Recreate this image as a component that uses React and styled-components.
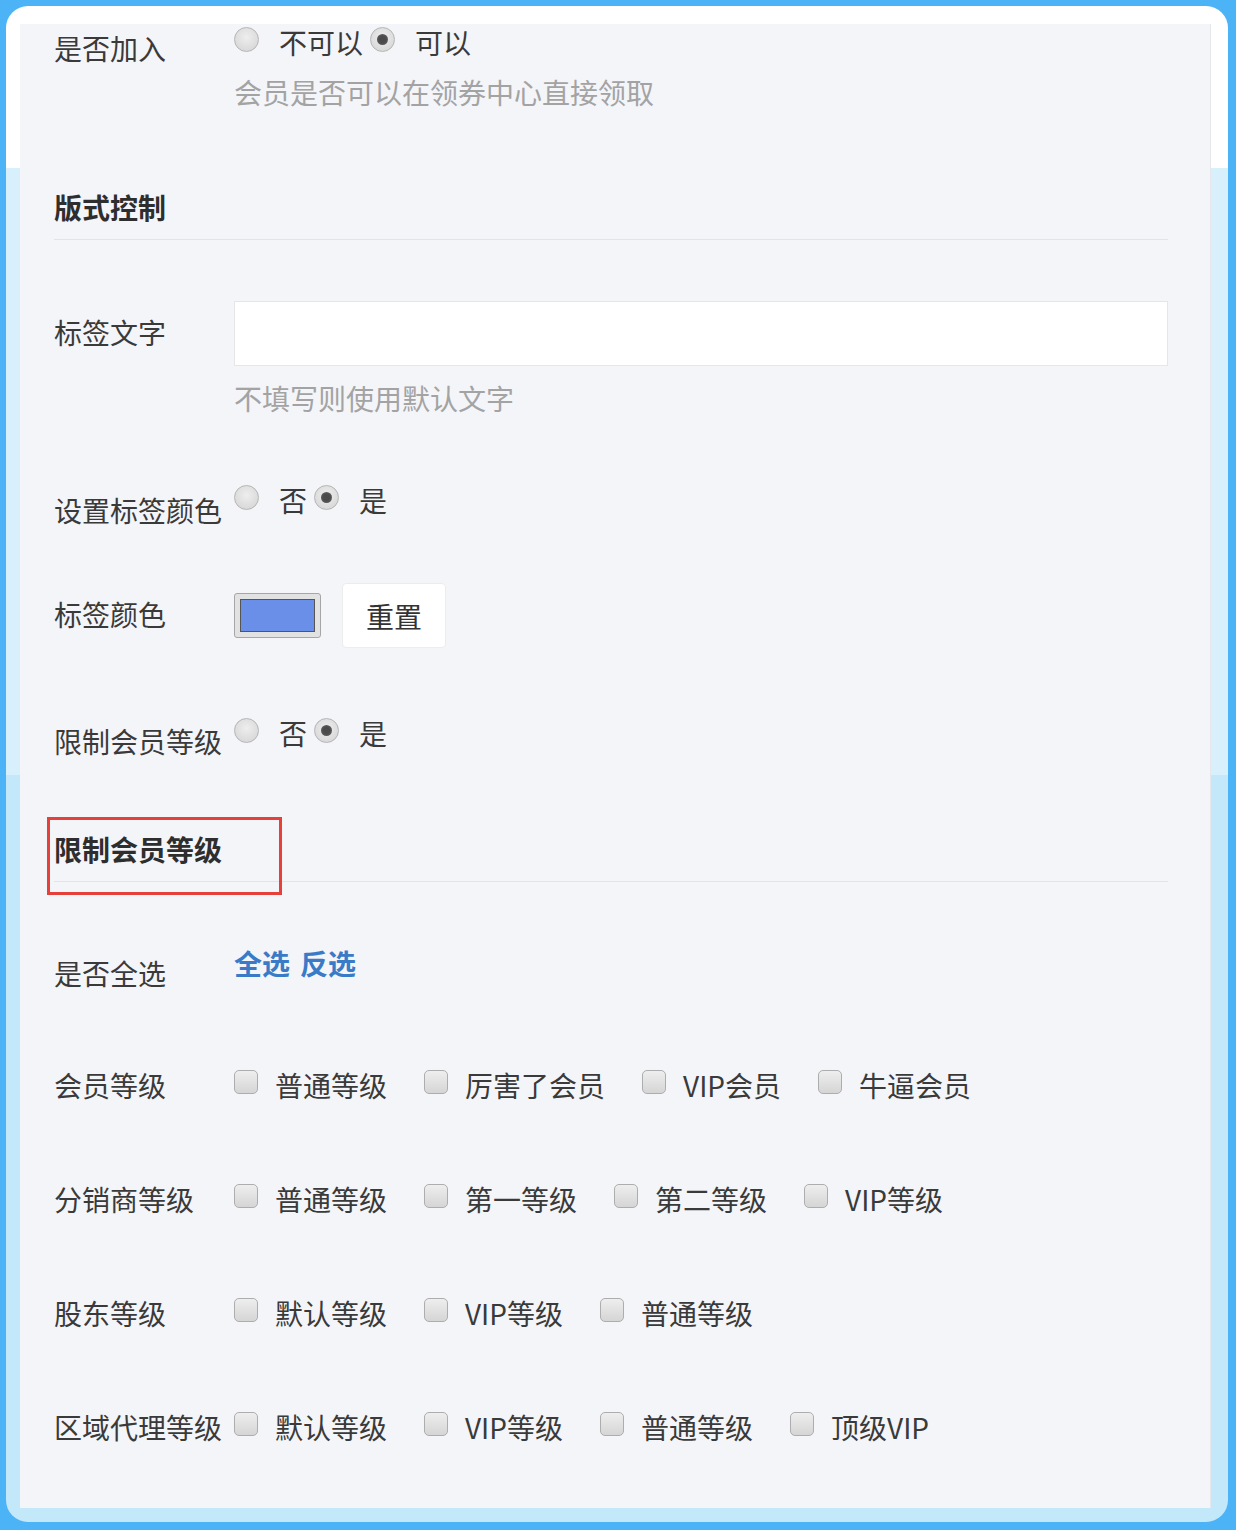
import React from 'react'
import styled, { createGlobalStyle } from 'styled-components'

const GlobalStyle = createGlobalStyle`
    html, body {
        margin: 0;
        padding: 0;
    }
    body {
        background: #4bb3f6;
        font-family: "Noto Sans CJK SC", "Noto Sans", sans-serif;
        color: #3a3a3a;
    }
`

const Frame = styled.div`
    margin: 6px 8px 8px 6px;
    padding: 18px 17px 14px 14px;
    border-radius: 22px;
    background: linear-gradient(
        to bottom,
        #fff 0,
        #fff 162px,
        #d8f0fc 162px,
        #d8f0fc 769px,
        #c3e8fa 769px
    );
`

const Panel = styled.div`
    background: #f4f5f9;
    border-right: 1px solid #e6e7eb;
    padding: 0 42px 63px 34px;
`

const Row = styled.div`
    display: flex;
    align-items: flex-start;
    margin-top: ${props => props.$mt || 0}px;
`

// the label sits a little lower than the controls, without making the row taller
const Label = styled.div`
    width: 180px;
    flex-shrink: 0;
    font-size: 28px;
    line-height: 36px;
    padding-top: ${props => props.$offset || 0}px;
    margin-bottom: ${props => -(props.$offset || 0)}px;
    white-space: nowrap;
`

const Field = styled.div`
    flex: 1;
    display: flex;
    flex-direction: column;
`

const Controls = styled.div`
    display: flex;
    align-items: center;
    min-height: 36px;
    font-size: 28px;
    line-height: 36px;
`

const Help = styled.div`
    margin-top: 14px;
    font-size: 28px;
    line-height: 36px;
    color: #a3a3a3;
`

const SectionTitle = styled.div`
    position: relative;
    margin-top: ${props => props.$mt}px;
    padding-bottom: 14px;
    border-bottom: 1px solid #e3e4e8;
    font-size: 28px;
    line-height: 36px;
    font-weight: bold;
    color: #2e2e2e;
`

const Highlight = styled.span`
    position: absolute;
    left: -7px;
    top: -14px;
    width: 235px;
    height: 78px;
    box-sizing: border-box;
    border: 3px solid #e6403b;
`

const Radio = styled.span`
    position: relative;
    width: 25px;
    height: 25px;
    flex-shrink: 0;
    box-sizing: border-box;
    border-radius: 50%;
    border: 1px solid #b5b5b5;
    background: radial-gradient(circle at 50% 40%, #eeeeee, #d2d2d2);
    margin: 0 20px 6px 0;

    &::after {
        content: '';
        display: ${props => (props.$checked ? 'block' : 'none')};
        position: absolute;
        left: 50%;
        top: 50%;
        width: 11px;
        height: 11px;
        margin: -5.5px 0 0 -5.5px;
        border-radius: 50%;
        background: radial-gradient(circle, #4a4a4a 40%, #6a6a6a);
    }
`

const OptionText = styled.span`
    margin-right: 7px;
`

const Checkbox = styled.span`
    width: 24px;
    height: 24px;
    flex-shrink: 0;
    box-sizing: border-box;
    border-radius: 5px;
    border: 1px solid #adadad;
    background: linear-gradient(to bottom, #eeeeee, #d5d5d5);
    margin: 0 17px 6px 0;
`

const CheckText = styled.span`
    margin-right: 37px;
`

const TextInput = styled.input`
    height: 65px;
    box-sizing: border-box;
    border: 1px solid #e6e6e6;
    background: #fff;
    outline: none;
    font-size: 28px;
    padding: 0 12px;
    width: 100%;
`

const ColorSwatch = styled.span`
    width: 87px;
    height: 45px;
    box-sizing: border-box;
    border: 1px solid #a6a6a6;
    border-radius: 3px;
    background: #e2e2e2;
    padding: 5px;
    margin-right: 21px;

    span {
        display: block;
        height: 100%;
        box-sizing: border-box;
        border: 1px solid #555;
        background: ${props => props.$color};
    }
`

const Button = styled.button`
    width: 104px;
    height: 65px;
    border: 1px solid #ececec;
    border-radius: 4px;
    background: #fff;
    font-family: inherit;
    font-size: 28px;
    color: #333;
    padding: 0;
`

const Link = styled.a`
    color: #3a7bc8;
    font-weight: bold;
    margin-right: 10px;
    cursor: pointer;
`

const RadioGroup = ({ options, value }) => (
    <Controls>
        {options.map(opt => (
            <React.Fragment key={opt}>
                <Radio $checked={opt === value} />
                <OptionText>{opt}</OptionText>
            </React.Fragment>
        ))}
    </Controls>
)

const CheckGroup = ({ items }) => (
    <Controls>
        {items.map(item => (
            <React.Fragment key={item}>
                <Checkbox />
                <CheckText>{item}</CheckText>
            </React.Fragment>
        ))}
    </Controls>
)

const levels = [
    { name: '会员等级', items: ['普通等级', '厉害了会员', 'VIP会员', '牛逼会员'], mt: 86 },
    { name: '分销商等级', items: ['普通等级', '第一等级', '第二等级', 'VIP等级'], mt: 78 },
    { name: '股东等级', items: ['默认等级', 'VIP等级', '普通等级'], mt: 78 },
    { name: '区域代理等级', items: ['默认等级', 'VIP等级', '普通等级', '顶级VIP'], mt: 78 },
]

export default function App() {
    return (
        <>
            <GlobalStyle />
            <Frame>
                <Panel>
                    <Row>
                        <Label $offset={6}>是否加入</Label>
                        <Field>
                            <RadioGroup options={['不可以', '可以']} value="可以" />
                            <Help>会员是否可以在领券中心直接领取</Help>
                        </Field>
                    </Row>

                    <SectionTitle $mt={79}>版式控制</SectionTitle>

                    <Row $mt={61}>
                        <Label $offset={13}>标签文字</Label>
                        <Field>
                            <TextInput />
                            <Help>不填写则使用默认文字</Help>
                        </Field>
                    </Row>

                    <Row $mt={66}>
                        <Label $offset={10}>设置标签颜色</Label>
                        <Field>
                            <RadioGroup options={['否', '是']} value="是" />
                        </Field>
                    </Row>

                    <Row $mt={65}>
                        <Label $offset={13}>标签颜色</Label>
                        <Field>
                            <Controls>
                                <ColorSwatch $color="#6a8fe9"><span /></ColorSwatch>
                                <Button>重置</Button>
                            </Controls>
                        </Field>
                    </Row>

                    <Row $mt={67}>
                        <Label $offset={8}>限制会员等级</Label>
                        <Field>
                            <RadioGroup options={['否', '是']} value="是" />
                        </Field>
                    </Row>

                    <SectionTitle $mt={80}>
                        限制会员等级
                        <Highlight />
                    </SectionTitle>

                    <Row $mt={63}>
                        <Label $offset={10}>是否全选</Label>
                        <Field>
                            <Controls>
                                <Link>全选</Link>
                                <Link>反选</Link>
                            </Controls>
                        </Field>
                    </Row>

                    {levels.map(level => (
                        <Row key={level.name} $mt={level.mt}>
                            <Label>{level.name}</Label>
                            <Field>
                                <CheckGroup items={level.items} />
                            </Field>
                        </Row>
                    ))}
                </Panel>
            </Frame>
        </>
    )
}
